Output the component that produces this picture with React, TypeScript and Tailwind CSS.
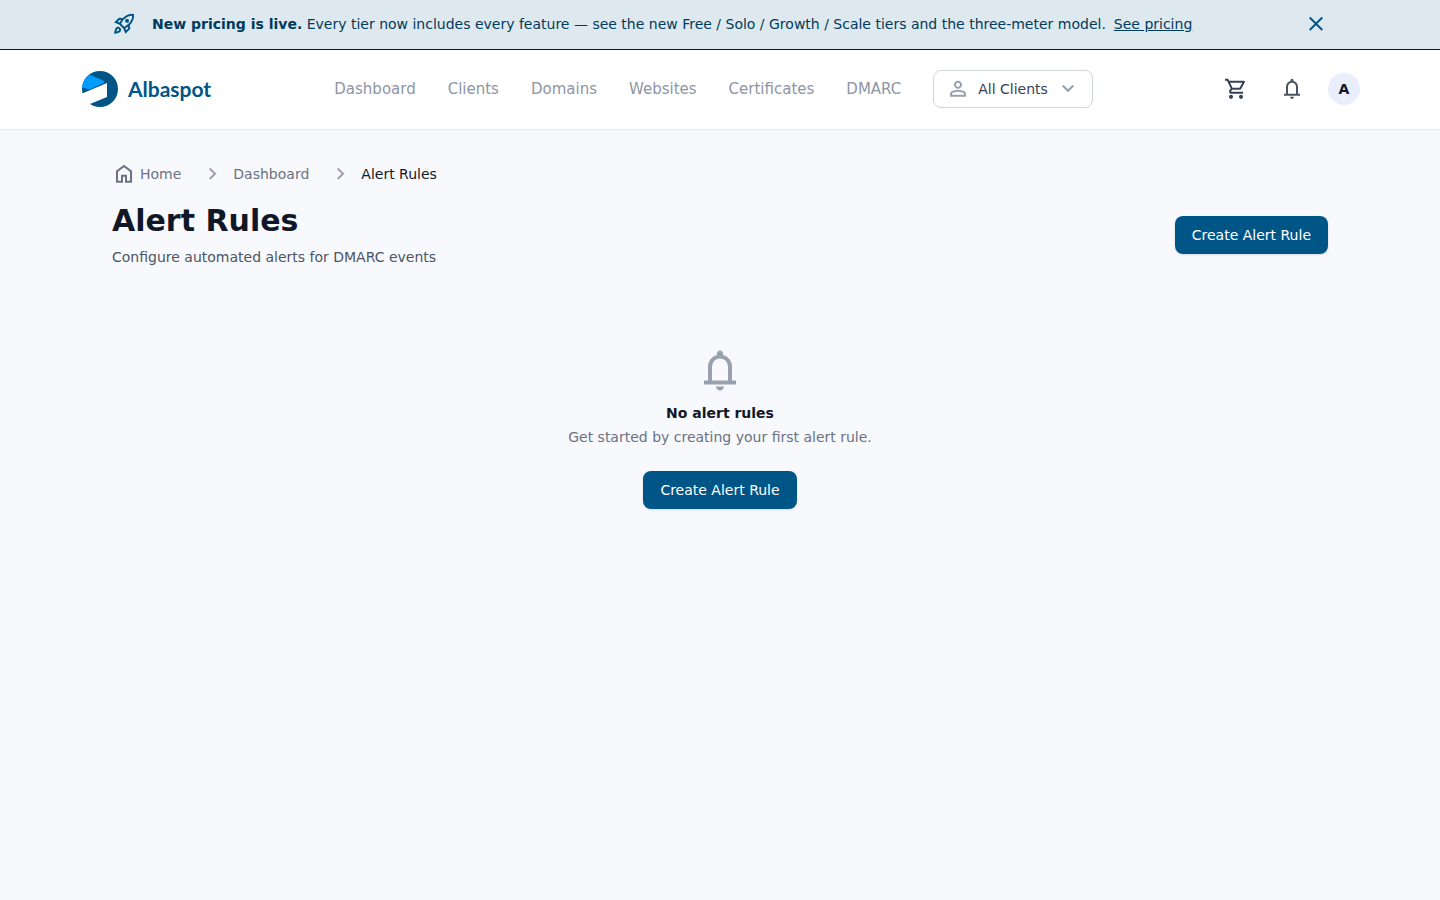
import React from 'react';

const icons = {
  rocket:
    'm226-559 78 33q14-28 29-54t33-52l-56-11-84 84Zm142 83 114 113q42-16 90-49t90-75q70-70 109.5-155.5T806-800q-72-5-158 34.5T492-656q-42 42-75 90t-49 90Zm178-65q-23-23-23-56.5t23-56.5q23-23 57-23t57 23q23 23 23 56.5T660-541q-23 23-57 23t-57-23Zm19 321 84-84-11-56q-26 18-52 32.5T532-299l33 79Zm313-653q19 121-23.5 235.5T708-419l20 99q4 20-2 39t-20 33L538-80l-84-197-171-171-197-84 167-168q14-14 33.5-20t39.5-2l99 20q104-104 218-147t235-24ZM157-321q35-35 85.5-35.5T328-322q35 35 34.5 85.5T327-151q-25 25-83.5 43T82-76q14-103 32-161.5t43-83.5Zm57 56q-10 10-20 36.5T180-175q27-4 53.5-13.5T270-208q12-12 13-29t-11-29q-12-12-29-11.5T214-265Z',
  close:
    'm256-200-56-56 224-224-224-224 56-56 224 224 224-224 56 56-224 224 224 224-56 56-224-224-224 224Z',
  cart:
    'M280-80q-33 0-56.5-23.5T200-160q0-33 23.5-56.5T280-240q33 0 56.5 23.5T360-160q0 33-23.5 56.5T280-80Zm400 0q-33 0-56.5-23.5T600-160q0-33 23.5-56.5T680-240q33 0 56.5 23.5T760-160q0 33-23.5 56.5T680-80ZM246-720l96 200h280l110-200H246Zm-38-80h590q23 0 35 20.5t1 41.5L692-482q-11 20-29.5 31T622-440H324l-44 80h480v80H280q-45 0-68-39.5t-2-78.5l54-98-144-304H40v-80h130l38 80Z',
  bell:
    'M160-200v-80h80v-280q0-83 50-147.5T420-792v-28q0-25 17.5-42.5T480-880q25 0 42.5 17.5T540-820v28q80 20 130 84.5T720-560v280h80v80H160ZM480-80q-33 0-56.5-23.5T400-160h160q0 33-23.5 56.5T480-80ZM320-280h320v-280q0-66-47-113t-113-47q-66 0-113 47t-47 113v280Z',
  person:
    'M480-480q-66 0-113-47t-47-113q0-66 47-113t113-47q66 0 113 47t47 113q0 66-47 113t-113 47ZM160-160v-112q0-34 17.5-62.5T224-378q62-31 126-46.5T480-440q66 0 130 15.5T736-378q29 15 46.5 43.5T800-272v112H160Zm80-80h480v-32q0-11-5.5-20T700-306q-54-27-109-40.5T480-360q-56 0-111 13.5T260-306q-9 5-14.5 14t-5.5 20v32Zm240-320q33 0 56.5-23.5T560-640q0-33-23.5-56.5T480-720q-33 0-56.5 23.5T400-640q0 33 23.5 56.5T480-560Z',
  home:
    'M240-200h120v-240h240v240h120v-360L480-740 240-560v360Zm-80 80v-480l320-240 320 240v480H520v-240h-80v240H160Z',
  chevronRight: 'M504-480 320-664l56-56 240 240-240 240-56-56 184-184Z',
  chevronDown: 'M480-344 240-584l56-56 184 184 184-184 56 56-240 240Z',
};

const navLinks = ['Dashboard', 'Clients', 'Domains', 'Websites', 'Certificates', 'DMARC'];

export default function App() {
  return (
    <div className="min-h-screen bg-[#f8f9fd] font-['DejaVu_Sans',sans-serif] text-sm text-gray-900">
      <PricingBanner />
      <Header />
      <main className="max-w-7xl mx-auto px-8 py-8">
        <Breadcrumb />
        <div className="mt-4 flex items-center justify-between">
          <div>
            <h1 className="text-3xl leading-[37px] font-bold">Alert Rules</h1>
            <p className="mt-2 text-gray-600">Configure automated alerts for DMARC events</p>
          </div>
          <CreateButton />
        </div>
        <EmptyState />
      </main>
    </div>
  );
}

function Icon({ name, className = 'size-6' }: { name: keyof typeof icons; className?: string }) {
  return (
    <svg viewBox="0 -950 960 960" fill="currentColor" aria-hidden="true" className={`shrink-0 ${className}`}>
      <path d={icons[name]} />
    </svg>
  );
}

function PricingBanner() {
  return (
    <div className="bg-[#dee9ef] border-b border-gray-900 text-[#003a5c]">
      <div className="max-w-7xl mx-auto px-8 pt-3 pb-[13px] flex items-center justify-between">
        <div className="flex items-center gap-4">
          <Icon name="rocket" className="size-6 text-[#005587]" />
          <p>
            <strong className="font-bold">New pricing is live.</strong> Every tier now includes every feature — see the
            new Free / Solo / Growth / Scale tiers and the three-meter model.
            <a href="#pricing" className="ml-2 underline">See pricing</a>
          </p>
        </div>
        <button aria-label="Dismiss" className="text-[#005587]">
          <Icon name="close" />
        </button>
      </div>
    </div>
  );
}

function Header() {
  return (
    <header className="bg-white border-b border-gray-200">
      <div className="max-w-7xl mx-auto h-[79px] pb-px flex items-center justify-between">
        <a href="#home" className="flex items-center gap-2 text-[#005587]">
          <Logo />
          <span className="font-['Lato',sans-serif] text-[21px] leading-7 font-bold">Albaspot</span>
        </a>

        <nav className="flex items-center gap-8 text-[15px] leading-6 text-[#8e95a5]">
          {navLinks.map((link) => (
            <a key={link} href={`#${link.toLowerCase()}`} className="hover:text-gray-700">
              {link}
            </a>
          ))}
          <button className="flex items-center gap-2 px-3 py-1.5 bg-white border border-gray-300 rounded-lg text-sm text-gray-700">
            <Icon name="person" className="size-6 text-gray-400" />
            All Clients
            <Icon name="chevronDown" className="size-6 text-gray-400" />
          </button>
        </nav>

        <div className="flex items-center gap-4">
          <button aria-label="Cart" className="p-2 text-gray-700">
            <Icon name="cart" />
          </button>
          <button aria-label="Notifications" className="p-2 text-gray-600">
            <Icon name="bell" />
          </button>
          <button className="size-8 rounded-full bg-[#e8eefb] font-bold">A</button>
        </div>
      </div>
    </header>
  );
}

function Logo() {
  return (
    <svg viewBox="0 0 40 40" className="size-10" aria-hidden="true">
      <circle cx="20" cy="20" r="18" fill="#005587" />
      <path d="M1 25 L27 14 V28 L10 35 L6 40 H0 Z" fill="#fff" />
      <path d="M9.500 5.500 L24 12 L24 14 L9 20.500 L2.200 18.500 A18 18 0 0 1 9.500 5.500Z" fill="#009cff" />
    </svg>
  );
}

function Breadcrumb() {
  return (
    <nav aria-label="Breadcrumb">
      <ol className="flex items-center gap-5 text-gray-500">
        <li>
          <a href="#home" className="flex items-center gap-1">
            <Icon name="home" />
            Home
          </a>
        </li>
        <li className="flex items-center gap-2">
          <Icon name="chevronRight" className="size-6 text-gray-400" />
          <a href="#dashboard">Dashboard</a>
        </li>
        <li className="flex items-center gap-2">
          <Icon name="chevronRight" className="size-6 text-gray-400" />
          <span aria-current="page" className="text-gray-900">Alert Rules</span>
        </li>
      </ol>
    </nav>
  );
}

function CreateButton() {
  return (
    <button className="px-4 py-2 border border-transparent rounded-lg bg-[#005587] text-white shadow-sm hover:bg-[#00466f]">
      Create Alert Rule
    </button>
  );
}

function EmptyState() {
  return (
    <div className="mt-8 py-12 flex flex-col items-center text-center">
      <Icon name="bell" className="size-12 text-gray-400" />
      <h3 className="mt-2 font-bold">No alert rules</h3>
      <p className="mt-1 mb-6 text-gray-500">Get started by creating your first alert rule.</p>
      <CreateButton />
    </div>
  );
}
